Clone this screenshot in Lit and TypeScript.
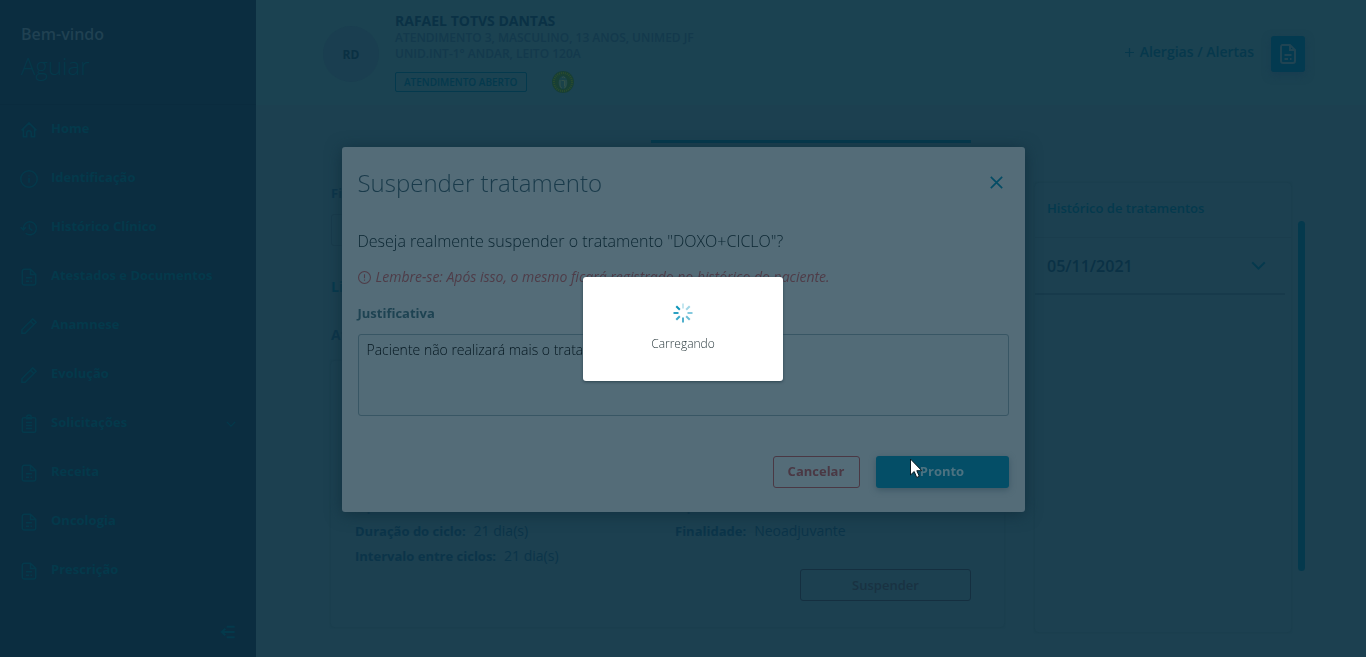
import { LitElement, html, css, svg, nothing } from "lit";
import { customElement, property } from "lit/decorators.js";

const docIcon = svg`<path d="M6 3h8l5 5v11a2 2 0 0 1-2 2H7a2 2 0 0 1-2-2V5a2 2 0 0 1 1-2z"/><path d="M14 3v5h5M8.500 13h7M8.500 17h3.500M14 17h1.500"/>`;
const docSmallIcon = svg`<path d="M14 1.500H6a3 3 0 0 0-3 3v15a3 3 0 0 0 3 3h12a3 3 0 0 0 3-3V8.500zM14 1.500v7h7M8 13h8M8 17.500h4M14 17.500h2"/>`;
const pencilIcon = svg`<path d="M2.500 21.500v-4.500L17 2.500l4.500 4.500L7 21.500zM14 5.500l4.500 4.500"/>`;
const shapes: Record<string, unknown> = {
  home: svg`<path d="M2 12.500 12 2.500l10 10M4.500 10.500V21h4.500v-5a3 3 0 0 1 6 0v5h4.500V10.500"/>`,
  info: svg`<circle cx="12" cy="12" r="11"/><path d="M12 10.500v6.500M12 7v1.500"/>`,
  history: svg`<path d="M4.500 12.500A8.700 8.700 0 1 1 7.500 19M.8 11l3.700 3.500L8 11M12.500 7v5.500l4 3"/>`,
  doc: docIcon,
  page: docSmallIcon,
  pencil: pencilIcon,
  clipboard: svg`<rect x="3" y="3.500" width="18" height="19.500" rx="2"/><path d="M9 5V3a3 3 0 0 1 6 0v2zM8 10h8M8 14h8M8 18h8"/>`,
  chevron: svg`<path d="m2 7 10 10L22 7"/>`,
  collapse: svg`<path d="M10 4h12M3 12h19M10 20h12M8 7l-5.500 5L8 17"/>`,
  close: svg`<path d="m1.500 1.500 21 21M22.500 1.500l-21 21"/>`,
  alert: svg`<circle cx="12" cy="12" r="11"/><path d="M12 6v7.500M12 15.500v2.500"/>`,
  plus: svg`<path d="M12 0v24M0 12h24"/>`,
};

@customElement("ui-icon")
export class UiIcon extends LitElement {
  @property() name = "";
  static styles = css`
    :host { display: inline-flex; width: 18px; height: 18px; flex: none; }
    svg { width: 100%; height: 100%; fill: none; stroke: currentColor; stroke-width: var(--icon-stroke, 2); overflow: visible; }
  `;
  render() {
    return html`<svg viewBox="0 0 24 24" aria-hidden="true">${shapes[this.name]}</svg>`;
  }
}

@customElement("side-menu")
export class SideMenu extends LitElement {
  static styles = css`
    :host { display: flex; flex-direction: column; box-sizing: border-box; width: 256px; flex: none; background: #0b2d40; color: #04394b; }
    .welcome { box-sizing: border-box; height: 105px; padding: 22px 21px 0; border-bottom: 1px solid #0a2b3e; }
    .hello { margin: 0; font-size: 16px; line-height: 24px; color: #204152; font-weight: 600; }
    .user { margin: 4px 0 0; font-size: 24px; line-height: 32px; font-weight: 300; }
    ul { list-style: none; margin: 0; padding: 0; }
    a { display: flex; align-items: center; gap: 13px; height: 49px; padding: 0 20px; color: inherit; text-decoration: none; font-weight: 700; font-size: 13px; }
    .label { flex: 1; padding-bottom: 4px; }
    .more { width: 10px; height: 10px; --icon-stroke: 3; }
    .fold { margin: auto 20px 17px auto; padding: 0; border: 0; background: none; color: inherit; display: flex; }
    .fold ui-icon { width: 16px; height: 16px; --icon-stroke: 3; }
  `;
  private items = [
    ["home", "Home"], ["info", "Identificação"], ["history", "Histórico Clínico"],
    ["page", "Atestados e Documentos"], ["pencil", "Anamnese"], ["pencil", "Evolução"],
    ["clipboard", "Solicitações"], ["page", "Receita"], ["page", "Oncologia"], ["page", "Prescrição"],
  ];
  render() {
    return html`
      <div class="welcome"><p class="hello">Bem-vindo</p><p class="user">Aguiar</p></div>
      <nav><ul>${this.items.map(([icon, label]) => html`
        <li><a href="#"><ui-icon name=${icon}></ui-icon><span class="label">${label}</span>
          ${icon === "clipboard" ? html`<ui-icon class="more" name="chevron"></ui-icon>` : nothing}</a></li>`)}
      </ul></nav>
      <button class="fold" aria-label="Recolher menu"><ui-icon name="collapse"></ui-icon></button>`;
  }
}

@customElement("patient-header")
export class PatientHeader extends LitElement {
  static styles = css`
    :host { display: flex; box-sizing: border-box; height: 105px; padding: 12px 61px 0 67px; background: #1b4251; color: #0b3549; }
    .avatar { width: 56px; height: 56px; margin: 14px 16px 0 0; border-radius: 50%; background: #1a3e50; display: flex; align-items: center; justify-content: center; font-size: 12px; font-weight: 700; color: #0a3043; }
    .info { flex: 1; }
    h1 { margin: 0; font-size: 14px; line-height: 18px; font-weight: 700; color: #0a3145; }
    p { margin: 0; font-size: 12px; line-height: 16px; font-weight: 600; color: #13394c; }
    .status { display: flex; align-items: center; gap: 25px; margin-top: 9px; }
    .tag { border: 1px solid #04394d; border-radius: 2px; padding: 0 8px; font-size: 10px; line-height: 18px; font-weight: 600; color: #04394d; }
    .seal { width: 22px; height: 22px; }
    .alerts { display: flex; align-items: center; align-self: flex-start; gap: 6px; margin: 30px 17px 0 0; padding: 0; border: 0; background: none; font: inherit; font-size: 14px; line-height: 20px; font-weight: 600; color: #06384c; }
    .alerts ui-icon { width: 9px; height: 9px; --icon-stroke: 3; }
    .notes { width: 34px; height: 36px; margin-top: 24px; padding: 0; border: 0; border-radius: 3px; background: #033a50; color: #204453; box-shadow: 0 3px 8px #183c50; display: flex; align-items: center; justify-content: center; }
    .notes ui-icon { width: 24px; height: 24px; }
  `;
  render() {
    return html`
      <div class="avatar">RD</div>
      <div class="info">
        <h1>RAFAEL TOTVS DANTAS</h1>
        <p>ATENDIMENTO 3, MASCULINO, 13 ANOS, UNIMED JF</p>
        <p>UNID.INT-1° ANDAR, LEITO 120A</p>
        <div class="status">
          <span class="tag">ATENDIMENTO ABERTO</span>
          <svg class="seal" viewBox="0 0 22 22" aria-hidden="true">
            <circle cx="11" cy="11" r="11" fill="#183f35"/>
            <circle cx="11" cy="11" r="9" fill="none" stroke="#2b4c2e" stroke-width="2" stroke-dasharray="1 1"/>
            <ellipse cx="11" cy="11.500" rx="4.500" ry="6.500" fill="#1a4249"/>
            <path d="M10 6.500q2-1.500 3 .5M8 9v5q0 3 2 3M14 9v5q0 3-2 3M9.500 9.500h3v6" fill="none" stroke="#31504a"/>
          </svg>
        </div>
      </div>
      <button class="alerts"><ui-icon name="plus"></ui-icon>Alergias / Alertas</button>
      <button class="notes" aria-label="Documentos"><ui-icon name="doc"></ui-icon></button>`;
  }
}

@customElement("treatment-view")
export class TreatmentView extends LitElement {
  static styles = css`
    :host { display: flex; flex-direction: column; padding: 35px 61px 24px 75px; color: #0b3449; font-size: 14px; line-height: 20px; }
    .tabs { display: grid; grid-template-columns: repeat(3, 1fr); margin-right: 14px; height: 3px; }
    .active { grid-column: 2; background: #04394d; }
    .body { display: flex; margin-top: 40px; gap: 7px; }
    .columns { flex: 1; display: grid; grid-template-columns: 1fr 256px; gap: 31px; align-items: start; }
    .bar { width: 7px; height: 350px; margin-top: 38px; border-radius: 4px; background: #04394d; }
    label { display: block; font-size: 13px; font-weight: 700; line-height: 20px; }
    select { display: block; appearance: none; width: 50%; height: 32px; margin: 11px 0 31px; border: 1px solid #193b4c; border-radius: 3px; background: #1c4050; color: inherit; font: inherit; }
    .clear { color: #04394d; font-weight: 700; text-decoration: none; display: block; }
    h3 { margin: 28px 0 0; font-size: 14px; line-height: 20px; font-weight: 700; }
    .card { box-sizing: border-box; border-radius: 3px; box-shadow: 0 0 2px #173949; margin-top: 16px; padding: 135px 33px 26px 24px; }
    .grid { display: grid; grid-template-columns: 1fr 1fr; row-gap: 5px; margin-right: -24px; }
    dl { margin: 0; }
    .pair { display: flex; gap: 8px; height: 20px; }
    dt { font-size: 13px; font-weight: 700; }
    dd { margin: 0; }
    .suspend { display: block; width: 171px; height: 32px; margin: 3px 0 0 auto; border: 1px solid #152f40; border-radius: 3px; background: none; color: #193242; font: inherit; font-size: 13px; font-weight: 600; }
    aside { box-shadow: 0 0 2px #173949; border-radius: 3px; height: 449px; }
    h2 { margin: 0; padding: 15px 12px 19px; border-bottom: 1px solid #1a3d4d; font-size: 13px; line-height: 20px; font-weight: 600; color: #04394d; }
    .day { display: flex; align-items: center; justify-content: space-between; box-sizing: border-box; width: 250px; height: 57px; padding: 0 19px 0 12px; border: 0; border-bottom: 2px solid #173a4b; background: none; color: #0a3145; font: inherit; font-size: 16px; font-weight: 600; }
    .day ui-icon { width: 15px; height: 15px; color: #04394d; --icon-stroke: 3; }
  `;
  private pair(label: string, value: string) {
    return html`<div class="pair"><dt>${label}</dt><dd>${value}</dd></div>`;
  }
  render() {
    return html`
      <div class="tabs"><div class="active"></div></div>
      <div class="body">
        <div class="columns">
          <section>
            <label for="filter">Filtro</label>
            <select id="filter"><option></option></select>
            <a class="clear" href="#">Limpar</a>
            <h3>Atual</h3>
            <div class="card">
              <dl class="grid">
                ${this.pair("Tipo:", "")}
                ${this.pair("Tipo:", "")}
                ${this.pair("Duração do ciclo:", "21 dia(s)")}
                ${this.pair("Finalidade:", "Neoadjuvante")}
                ${this.pair("Intervalo entre ciclos:", "21 dia(s)")}
              </dl>
              <button class="suspend">Suspender</button>
            </div>
          </section>
          <aside>
            <h2>Histórico de tratamentos</h2>
            <button class="day">05/11/2021<ui-icon name="chevron"></ui-icon></button>
          </aside>
        </div>
        <div class="bar"></div>
      </div>`;
  }
}

@customElement("suspend-dialog")
export class SuspendDialog extends LitElement {
  static styles = css`
    :host { display: block; box-sizing: border-box; width: 50%; padding: 20px 16px 24px; border-radius: 3px; background: #546c78; box-shadow: 0 2px 16px #12303f; color: #1e4352; font-size: 14px; line-height: 20px; }
    header { display: flex; align-items: center; justify-content: space-between; height: 32px; padding-right: 6px; }
    h2 { margin: 0; font-size: 24px; line-height: 32px; font-weight: 300; color: #193a4a; }
    .close { display: flex; padding: 0; border: 0; background: none; color: #044c65; }
    .close ui-icon { width: 13px; height: 13px; margin-top: -2px; --icon-stroke: 3; }
    .question { margin: 30px 0 0; font-size: 16px; line-height: 24px; font-weight: 300; color: #0a2531; }
    .warning { display: flex; align-items: center; gap: 5px; margin: 14px 0 0; font-style: italic; color: #4f3c48; }
    .warning ui-icon { width: 13px; height: 13px; }
    label { display: block; margin: 16px 0 11px; font-size: 13px; font-weight: 700; }
    textarea { display: block; box-sizing: border-box; width: 100%; height: 82px; padding: 5px 8px; border: 1px solid #385664; border-radius: 3px; background: #526b77; resize: none; color: #04161f; font: inherit; font-weight: 300; outline: 0; }
    footer { display: flex; justify-content: flex-end; gap: 16px; margin-top: 40px; }
    footer button { height: 32px; border-radius: 3px; font: inherit; font-size: 13px; font-weight: 700; padding: 0 0 2px; }
    .cancel { width: 87px; border: 1px solid #4a3844; background: none; color: #4a3844; }
    .ok { width: 133px; border: 0; background: #044e67; color: #4c7281; box-shadow: 0 2px 6px #3c5765; }
  `;
  render() {
    return html`
      <header><h2>Suspender tratamento</h2>
        <button class="close" aria-label="Fechar"><ui-icon name="close"></ui-icon></button></header>
      <p class="question">Deseja realmente suspender o tratamento "DOXO+CICLO"?</p>
      <p class="warning"><ui-icon name="alert"></ui-icon>Lembre-se: Após isso, o mesmo ficará registrado no histórico do paciente.</p>
      <label for="reason">Justificativa</label>
      <textarea id="reason" .value=${"Paciente não realizará mais o tratamento"}></textarea>
      <footer><button class="cancel">Cancelar</button><button class="ok">Pronto</button></footer>`;
  }
}

@customElement("loading-box")
export class LoadingBox extends LitElement {
  static styles = css`
    :host { display: flex; flex-direction: column; align-items: center; box-sizing: border-box; width: 200px; height: 104px; padding-top: 26px; gap: 11px; border-radius: 3px; background: #fff; box-shadow: 0 1px 3px #2c4450; color: #2a3a3e; font-size: 12px; line-height: 20px; font-weight: 300; }
    svg { width: 20px; height: 20px; }
  `;
  private tones = ["#c5e7f0", "#a0d6e6", "#84c9de", "#6bbdd5", "#51b0cc", "#3da8c8", "#2ba0c2", "#0c94b8"];
  render() {
    return html`
      <svg viewBox="0 0 20 20" aria-hidden="true">${this.tones.map((tone, i) => svg`
        <rect x="9" y="0.500" width="2" height="5" fill=${tone} transform="rotate(${i * 45} 10 10)"/>`)}</svg>
      <span role="status">Carregando</span>`;
  }
}

@customElement("app-root")
export class AppRoot extends LitElement {
  static styles = css`
    :host { display: block; font-family: "Open Sans", "Noto Sans", sans-serif; }
    .shell { display: flex; height: 100vh; overflow: hidden; background: #1c4050; }
    main { flex: 1; min-width: 0; }
    .layer { position: fixed; inset: 0; display: flex; align-items: center; justify-content: center; }
    .dialog { padding-top: 2px; }
    .pointer { position: fixed; left: 910px; top: 458px; width: 13px; height: 21px; }
  `;
  render() {
    return html`
      <div class="shell">
        <side-menu></side-menu>
        <main><patient-header></patient-header><treatment-view></treatment-view></main>
      </div>
      <div class="layer dialog"><suspend-dialog></suspend-dialog></div>
      <div class="layer"><loading-box></loading-box></div>
      <svg class="pointer" viewBox="0 0 13 21" aria-hidden="true">
        <path d="M.5 1v16l3.700-3.500 2.500 6 2.600-1.200-2.500-5.600h5z" fill="#fff" stroke="#0a1a22"/>
      </svg>`;
  }
}
